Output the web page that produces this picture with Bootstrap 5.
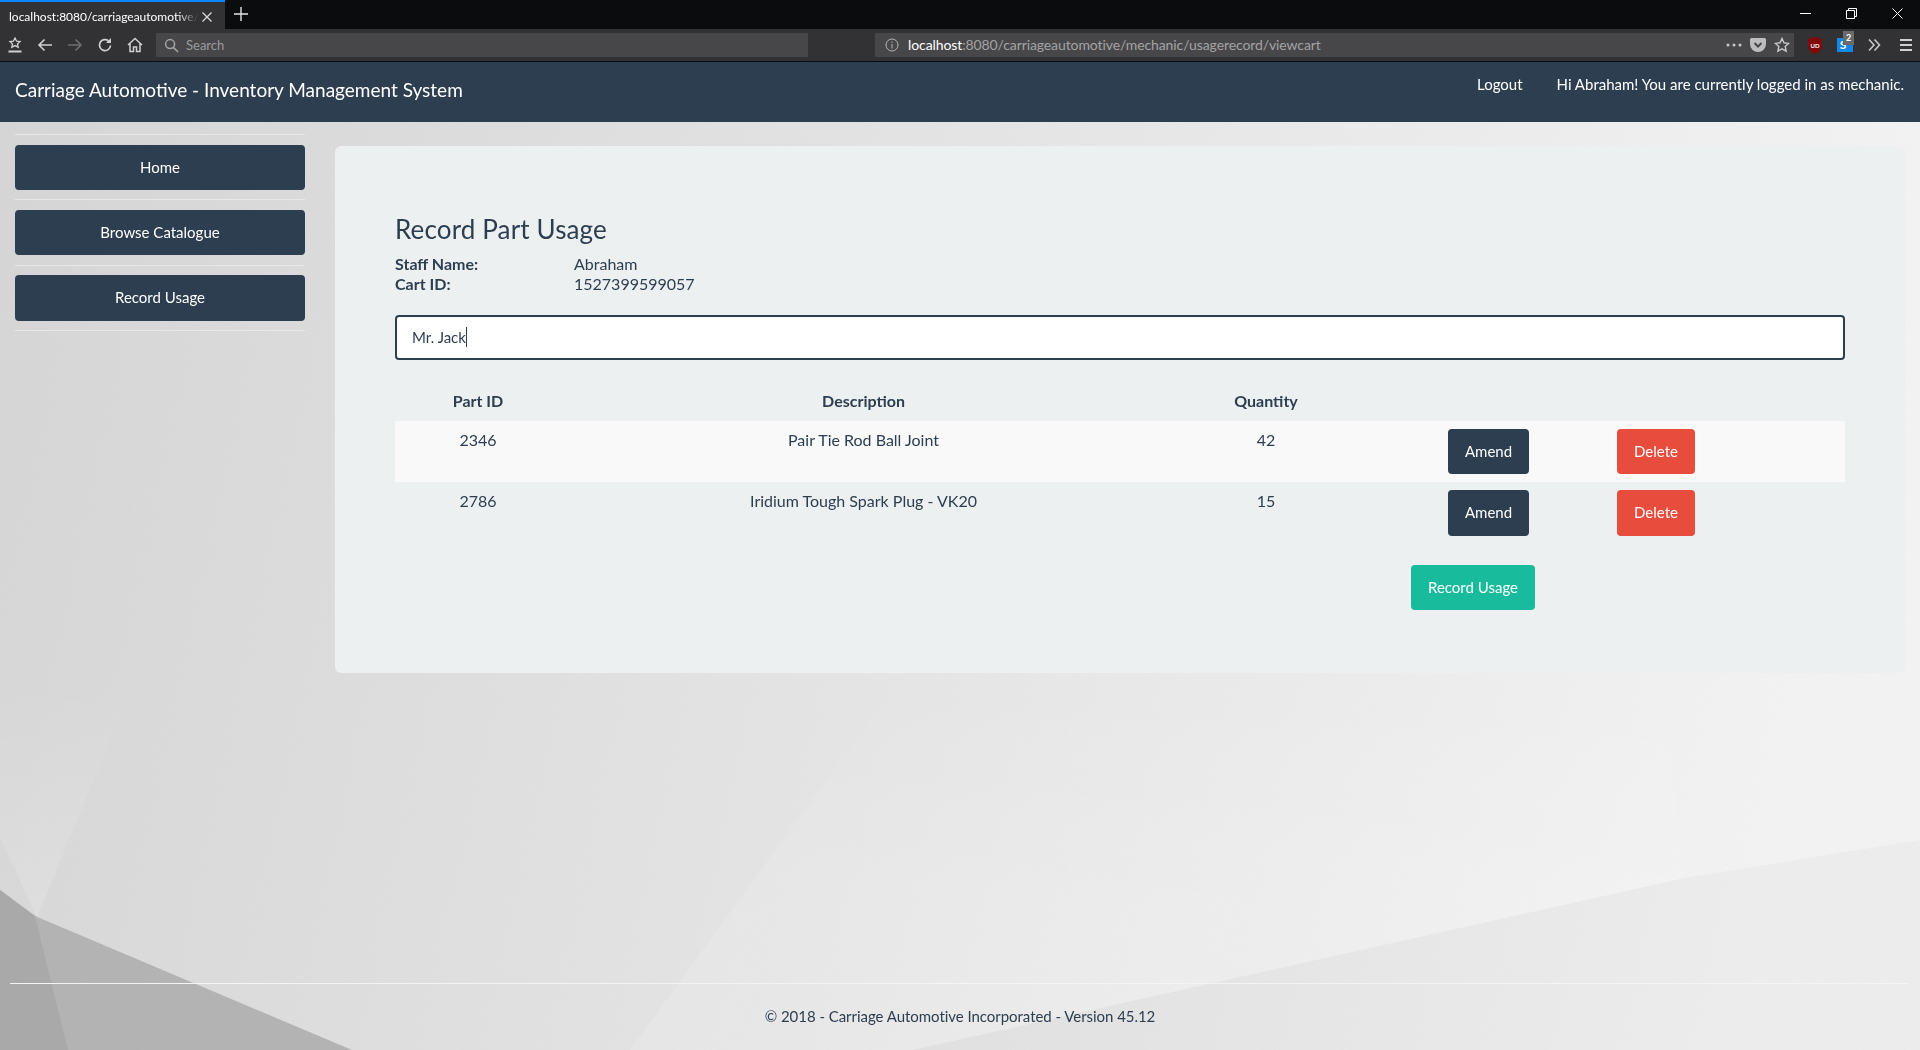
<!DOCTYPE html>
<html lang="en"><head>
  <meta charset="UTF-8">
  <meta name="viewport" content="width=device-width, initial-scale=1.0">
  <title>Carriage Automotive - Inventory Management System</title>
  <link href="https://cdn.jsdelivr.net/npm/bootstrap@5.3.0/dist/css/bootstrap.min.css" rel="stylesheet">
  <style>
    :root {
      --primary-color: #2c3e50;
    }

    body {
      font-family: Lato, "Liberation Sans", sans-serif;
      font-size: 15px;
      line-height: 1.42857;
      color: var(--primary-color);
      background: #e2e2e2;
      overflow: hidden;
    }

    .bg-layer {
      position: fixed;
      inset: 0;
      z-index: -1;
      width: 100%;
      height: 100%;
    }

    /* browser chrome */
    .tab-strip {
      height: 29px;
      background: #0b0c0e;
      color: #fff;
    }

    .active-tab {
      width: 225px;
      height: 29px;
      padding: 2px 12px 0 9px;
      background: #323234;
      border-top: 2px solid #0a84ff;
      font-size: 12px;
      white-space: nowrap;
    }

    .tab-title {
      -webkit-mask-image: linear-gradient(to right, #000 88%, transparent);
      mask-image: linear-gradient(to right, #000 88%, transparent);
    }

    .win-controls {
      gap: 35px;
      padding-right: 17px;
    }

    .tool-bar {
      height: 33px;
      padding: 4px 0 4px 7px;
      background: #323234;
      border-bottom: 1px solid #0c0c0d;
      color: #d0d0d2;
    }

    .tool-icons {
      gap: 14px;
      width: 149px;
    }

    .search-box, .url-box {
      height: 24px;
      background: #474749;
      border-radius: 1px;
      font-size: 13px;
    }

    .search-box {
      width: 652px;
      padding-left: 8px;
      gap: 7px;
      color: #9b9b9d;
    }

    .url-box {
      width: 919px;
      margin-left: 67px;
      padding: 0 4px 0 10px;
      font-size: 14px;
    }

    .url-text {
      margin-left: 9px;
      color: #a3a3a5;
      letter-spacing: -0.1px;
    }

    .url-text b {
      font-weight: 400;
      color: #fff;
    }

    .ext-icons {
      gap: 14px;
      margin-left: 13px;
    }

    .ext-badge {
      position: absolute;
      top: -6px;
      left: 6px;
      width: 11px;
      height: 14px;
      background: #6a6a6c;
      color: #fff;
      font-size: 9px;
      font-weight: 700;
      line-height: 14px;
      text-align: center;
    }

    /* app */
    .app-bar {
      height: 60px;
      padding: 0 16px 0 15px;
      background: var(--primary-color);
      color: #fff;
    }

    .app-title {
      font-size: 19px;
      padding-top: 14px;
    }

    .app-links {
      gap: 34px;
      padding-top: 12px;
    }

    .app-links a {
      color: #fff;
      text-decoration: none;
    }

    .page-body {
      padding: 0 15px;
      gap: 30px;
    }

    .side-menu {
      width: 290px;
      flex-shrink: 0;
      padding-top: 12px;
    }

    .side-rule {
      margin: 9.5px 0;
      border: 0;
      border-top: 1px solid #e8e8e6;
      opacity: 1;
    }

    .side-menu .side-rule:first-child {
      margin-top: 0;
    }

    .btn {
      font-size: 15px;
      line-height: 1.42857;
      padding: 10px 15px;
      border-width: 2px;
      border-radius: 4px;
    }

    .btn-primary {
      --bs-btn-bg: #2c3e50;
      --bs-btn-border-color: #2c3e50;
    }

    .btn-danger {
      --bs-btn-bg: #e74c3c;
      --bs-btn-border-color: #e74c3c;
    }

    .btn-success {
      --bs-btn-bg: #18bc9c;
      --bs-btn-border-color: #18bc9c;
    }

    .usage-panel {
      flex-grow: 1;
      margin-top: 24px;
      padding: 69px 60px 63px;
      background: #ecf0f1;
      border-radius: 6px;
    }

    .usage-title {
      font-size: 26px;
      font-weight: 400;
      line-height: 1.1;
      letter-spacing: 0.14px;
      margin-bottom: 10px;
    }

    .info-row {
      font-size: 16px;
      line-height: 20px;
    }

    .info-label {
      width: 179px;
      font-weight: 700;
    }

    .entry-wrap {
      margin: 21px 0 22.6px;
    }

    .entry-input {
      height: 45px;
      padding: 10px 15px;
      font-size: 15px;
      color: var(--primary-color);
      border: 2px solid var(--primary-color);
      border-radius: 4px;
    }

    .entry-caret {
      position: absolute;
      left: 71px;
      top: 12px;
      width: 1px;
      height: 20px;
      background: #2c3e50;
    }

    .parts-table {
      --bs-table-bg: transparent;
      --bs-table-color: #2c3e50;
      --bs-table-striped-bg: #f9f9f9;
      --bs-table-striped-color: #2c3e50;
      table-layout: fixed;
      margin-bottom: 21px;
      font-size: 16px;
    }

    .parts-table th, .parts-table td {
      padding: 8px;
      vertical-align: top;
      text-align: center;
    }

    .parts-table .col-delete {
      padding-left: 6px;
      text-align: left;
    }

    .w-part { width: 166px; }
    .w-desc { width: 605px; }
    .w-qty { width: 200px; }
    .w-amend { width: 245px; }

    .record-row {
      padding-right: 310px;
    }

    .foot-rule {
      margin: 0 12px 0 10px;
      border: 0;
      border-top: 1px solid #f4f4f4;
      opacity: 1;
    }

    .page-foot {
      height: 66px;
      padding-top: 22px;
      text-align: center;
      letter-spacing: -0.04px;
    }
  </style>
</head>
<body class="d-flex flex-column vh-100">
  <!-- polygon wallpaper behind the page -->
  <svg class="bg-layer" viewBox="0 0 1920 1050" preserveAspectRatio="none" aria-hidden="true">
    <defs>
      <linearGradient id="wall" x1="0" y1="0" x2="1" y2="0.12">
        <stop offset="0" stop-color="#d5d5d5"/>
        <stop offset="0.45" stop-color="#e3e3e3"/>
        <stop offset="1" stop-color="#f3f3f3"/>
      </linearGradient>
      <linearGradient id="shardFade" gradientUnits="userSpaceOnUse" x1="0" y1="680" x2="0" y2="917">
        <stop offset="0" stop-color="#fff" stop-opacity="0"/>
        <stop offset="1" stop-color="#fff" stop-opacity="0.16"/>
      </linearGradient>
      <linearGradient id="facetFade" gradientUnits="userSpaceOnUse" x1="0" y1="680" x2="0" y2="900">
        <stop offset="0" stop-color="#fff" stop-opacity="0"/>
        <stop offset="1" stop-color="#fff" stop-opacity="0.13"/>
      </linearGradient>
      <filter id="grain"><feTurbulence type="fractalNoise" baseFrequency="0.9" numOctaves="2"/><feColorMatrix type="saturate" values="0"/></filter>
    </defs>
    <rect width="1920" height="1050" fill="url(#wall)"/>
    <polygon points="0,680 135,680 37,917 0,837" fill="url(#shardFade)"/>
    <polygon points="905,672 1660,672 1684,878 912,1050 630,1050" fill="url(#facetFade)"/>
    <polygon points="912,1050 1684,878 1920,840 1920,1050" fill="#000" opacity="0.025"/>
    <polygon points="0,890 35,916 352,1050 0,1050" fill="#b3b3b3"/>
    <polygon points="0,890 35,916 68,1050 0,1050" fill="#a9a9a9"/>
    <rect width="1920" height="1050" filter="url(#grain)" opacity="0.04"/>
  </svg>

  <div class="tab-strip d-flex align-items-start">
    <div class="active-tab d-flex align-items-center justify-content-between">
      <span class="tab-title">localhost:8080/carriageautomotive/</span>
      <svg width="12" height="12" viewBox="0 0 12 12" stroke="#d8d8d8" stroke-width="1.3"><path d="M1.5 1.5l9 9M10.5 1.5l-9 9"/></svg>
    </div>
    <svg class="ms-2 mt-1" width="16" height="20" viewBox="0 0 16 20" stroke="#e4e4e4" stroke-width="1.4"><path d="M8 3v14M1 10h14"/></svg>
    <div class="win-controls d-flex align-items-center ms-auto pt-1 mt-1">
      <svg width="11" height="11" viewBox="0 0 11 11" stroke="#fff"><path d="M0 5.5h11"/></svg>
      <svg width="11" height="11" viewBox="0 0 11 11" fill="none" stroke="#fff"><path d="M.5 2.5h8v8h-8zM2.5 2.5v-2h8v8h-2"/></svg>
      <svg width="11" height="11" viewBox="0 0 11 11" stroke="#fff"><path d="M.5.5l10 10M10.5.5l-10 10"/></svg>
    </div>
  </div>

  <div class="tool-bar d-flex align-items-center">
    <div class="tool-icons d-flex align-items-center">
      <svg width="16" height="16" viewBox="0 0 16 16" fill="none" stroke="currentColor" stroke-width="1.3"><path d="M8 1l1.600 3.200 3.400.4-2.500 2.300.7 3.300L8 8.600l-3.200 1.600.7-3.300L3 4.600l3.400-.4z"/><path d="M1.500 14.500h13" stroke-width="2"/></svg>
      <svg width="16" height="16" viewBox="0 0 16 16" fill="none" stroke="currentColor" stroke-width="1.6"><path d="M15 8H2M7.500 2.500L2 8l5.500 5.500"/></svg>
      <svg width="16" height="16" viewBox="0 0 16 16" fill="none" stroke="#6e6e70" stroke-width="1.6"><path d="M1 8h13M8.500 2.500L14 8l-5.500 5.500"/></svg>
      <svg width="16" height="16" viewBox="0 0 16 16" fill="none" stroke="currentColor" stroke-width="1.7"><path d="M13.500 8.500A5.500 5.500 0 1 1 11.500 3.800"/><path d="M14 1v5h-5" fill="currentColor" stroke="none"/></svg>
      <svg width="16" height="16" viewBox="0 0 16 16" fill="none" stroke="currentColor" stroke-width="1.5"><path d="M1 8l7-6.500L15 8M3 6.500V14.500h3.500V10h3v4.500H13V6.500"/></svg>
    </div>
    <div class="search-box d-flex align-items-center">
      <svg width="15" height="15" viewBox="0 0 16 16" fill="none" stroke="#a5a5a7" stroke-width="1.6"><circle cx="6.500" cy="6.500" r="4.800"/><path d="M10 10l5 5"/></svg>
      <span>Search</span>
    </div>
    <div class="url-box d-flex align-items-center">
      <svg width="14" height="14" viewBox="0 0 14 14" fill="none" stroke="#b5b5b7"><circle cx="7" cy="7" r="6"/><path d="M7 6v4.500M7 3.500v1.300"/></svg>
      <span class="url-text"><b>localhost</b>:8080/carriageautomotive/mechanic/usagerecord/viewcart</span>
      <div class="d-flex align-items-center gap-2 ms-auto">
        <svg width="16" height="4" viewBox="0 0 16 4" fill="#c8c8ca"><circle cx="2" cy="2" r="1.500"/><circle cx="8" cy="2" r="1.500"/><circle cx="14" cy="2" r="1.500"/></svg>
        <svg width="16" height="14" viewBox="0 0 16 14"><path d="M1.500 0h13A1.500 1.500 0 0 1 16 1.500V6A8 8 0 0 1 0 6V1.500A1.500 1.500 0 0 1 1.500 0z" fill="#bdbdbf"/><path d="M4.500 5L8 8.500 11.500 5" fill="none" stroke="#474749" stroke-width="2"/></svg>
        <svg width="16" height="16" viewBox="0 0 16 16" fill="none" stroke="#c8c8ca" stroke-width="1.400"><path d="M8 1.500l2 4.300 4.600.6-3.400 3.100.9 4.600L8 11.800l-4.100 2.300.9-4.600L1.400 6.400 6 5.800z"/></svg>
      </div>
    </div>
    <div class="ext-icons d-flex align-items-center">
      <svg width="16" height="17" viewBox="0 0 16 17"><path d="M8 0l7 2v7c0 4-3.500 6.500-7 8-3.500-1.500-7-4-7-8V2z" fill="#800a0a"/><text x="8" y="10.500" text-anchor="middle" fill="#fff" font-size="6" font-weight="700" font-family="Lato, sans-serif">UD</text></svg>
      <span class="position-relative d-inline-flex">
        <svg width="16" height="16" viewBox="0 0 16 16"><rect width="16" height="14" y="1" fill="#0f88e8"/><text x="6" y="12" text-anchor="middle" fill="#fff" font-size="12" font-weight="700" font-family="Lato, sans-serif">S</text></svg>
        <span class="ext-badge">2</span>
      </span>
      <svg width="14" height="14" viewBox="0 0 14 14" fill="none" stroke="#c8c8ca" stroke-width="1.600"><path d="M2 1.500L7 7l-5 5.500M7.500 1.500L12.500 7l-5 5.500"/></svg>
      <svg class="ms-1" width="14" height="14" viewBox="0 0 14 14" stroke="#d0d0d2" stroke-width="2"><path d="M1 2h12M1 7h12M1 12h12"/></svg>
    </div>
  </div>

  <nav class="app-bar d-flex justify-content-between align-items-start">
    <div class="app-title">Carriage Automotive - Inventory Management System</div>
    <div class="app-links d-flex">
      <a href="#">Logout</a>
      <span>Hi Abraham! You are currently logged in as mechanic.</span>
    </div>
  </nav>

  <div class="page-body d-flex align-items-start">
    <aside class="side-menu">
      <hr class="side-rule">
      <a href="#" class="btn btn-primary w-100">Home</a>
      <hr class="side-rule">
      <a href="#" class="btn btn-primary w-100">Browse Catalogue</a>
      <hr class="side-rule">
      <a href="#" class="btn btn-primary w-100">Record Usage</a>
      <hr class="side-rule">
    </aside>

    <main class="usage-panel">
      <h3 class="usage-title">Record Part Usage</h3>
      <div class="info-row d-flex"><span class="info-label">Staff Name:</span><span>Abraham</span></div>
      <div class="info-row d-flex"><span class="info-label">Cart ID:</span><span>1527399599057</span></div>

      <div class="entry-wrap position-relative">
        <input type="text" class="form-control entry-input" value="Mr. Jack">
        <span class="entry-caret"></span>
      </div>

      <table class="table table-striped table-borderless parts-table">
        <colgroup>
          <col class="w-part"><col class="w-desc"><col class="w-qty"><col class="w-amend"><col>
        </colgroup>
        <thead>
          <tr><th>Part ID</th><th>Description</th><th>Quantity</th><th></th><th></th></tr>
        </thead>
        <tbody id="partRows"></tbody>
      </table>

      <div class="record-row d-flex justify-content-end">
        <button class="btn btn-success" type="button">Record Usage</button>
      </div>
    </main>
  </div>

  <div class="mt-auto">
    <hr class="foot-rule">
    <footer class="page-foot">© 2018 - Carriage Automotive Incorporated - Version 45.12</footer>
  </div>

  <script src="https://cdn.jsdelivr.net/npm/bootstrap@5.3.0/dist/js/bootstrap.bundle.min.js"></script>
  <script>
    const cartParts = [
      { id: 2346, description: 'Pair Tie Rod Ball Joint', quantity: 42 },
      { id: 2786, description: 'Iridium Tough Spark Plug - VK20', quantity: 15 }
    ];

    document.getElementById('partRows').innerHTML = cartParts.map(part => `
      <tr>
        <td>${part.id}</td>
        <td>${part.description}</td>
        <td>${part.quantity}</td>
        <td><button class="btn btn-primary" type="button">Amend</button></td>
        <td class="col-delete"><button class="btn btn-danger" type="button">Delete</button></td>
      </tr>
    `).join('');
  </script>
</body></html>
